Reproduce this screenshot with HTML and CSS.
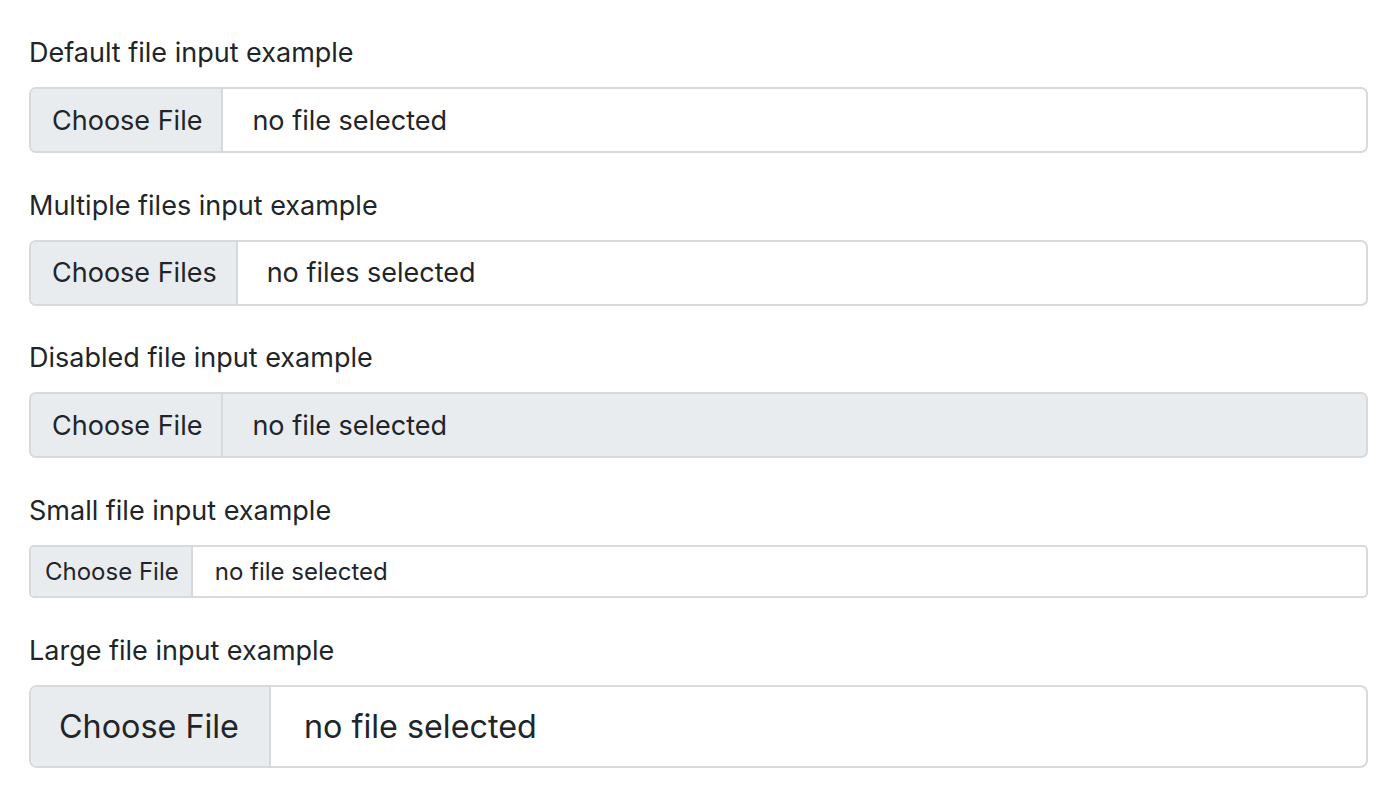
FILE: index.html
```html
<!DOCTYPE html>
<html lang="en">
<head>
<meta charset="utf-8">
<title>File inputs</title>
<link rel="stylesheet" href="styles.css">
</head>
<body>
<main class="page">
  <div class="group">
    <label class="label">Default file input example</label>
    <div class="file">
      <span class="file-btn">Choose File</span>
      <span class="file-text">no file selected</span>
    </div>
  </div>
  <div class="group">
    <label class="label">Multiple files input example</label>
    <div class="file">
      <span class="file-btn">Choose Files</span>
      <span class="file-text">no files selected</span>
    </div>
  </div>
  <div class="group">
    <label class="label">Disabled file input example</label>
    <div class="file file-disabled">
      <span class="file-btn">Choose File</span>
      <span class="file-text">no file selected</span>
    </div>
  </div>
  <div class="group">
    <label class="label">Small file input example</label>
    <div class="file file-sm">
      <span class="file-btn">Choose File</span>
      <span class="file-text">no file selected</span>
    </div>
  </div>
  <div class="group">
    <label class="label">Large file input example</label>
    <div class="file file-lg">
      <span class="file-btn">Choose File</span>
      <span class="file-text">no file selected</span>
    </div>
  </div>
</main>
</body>
</html>
```
FILE: styles.css
```css
html, body {
  margin: 0;
  padding: 0;
  background: #ffffff;
}
body {
  font-family: Inter, "Liberation Sans", sans-serif;
  color: #212529;
}
.page {
  padding: 32px 32px 0 29px;
  display: flex;
  flex-direction: column;
}
.group {
  display: flex;
  flex-direction: column;
  margin-bottom: 31.67px;
}
.label {
  font-size: 27px;
  line-height: 42px;
  height: 42px;
  margin-bottom: 13px;
}
.file {
  display: flex;
  align-items: stretch;
  height: 66px;
  box-sizing: border-box;
  border: 2px solid #d6d9dd;
  border-radius: 7px;
  overflow: hidden;
  background: #fff;
  font-size: 27px;
}
.file-btn {
  display: flex;
  align-items: center;
  background: #e9ecef;
  padding: 0 19px 0 21px;
  border-right: 2px solid #d6d9dd;
  white-space: nowrap;
}
.file-text {
  display: flex;
  align-items: center;
  padding-left: 29px;
  white-space: nowrap;
}
.file-disabled {
  background: #e9ecef;
}
.file-sm {
  height: 53px;
  font-size: 24px;
  border-radius: 5px;
}
.file-sm .file-btn {
  padding: 0 12px 0 14px;
}
.file-sm .file-text {
  padding-left: 22px;
}
.file-lg {
  height: 83px;
  font-size: 32.3px;
  border-radius: 8px;
}
.file-lg .file-btn {
  padding: 0 30px 0 28px;
}
.file-lg .file-text {
  padding-left: 33px;
}
```
